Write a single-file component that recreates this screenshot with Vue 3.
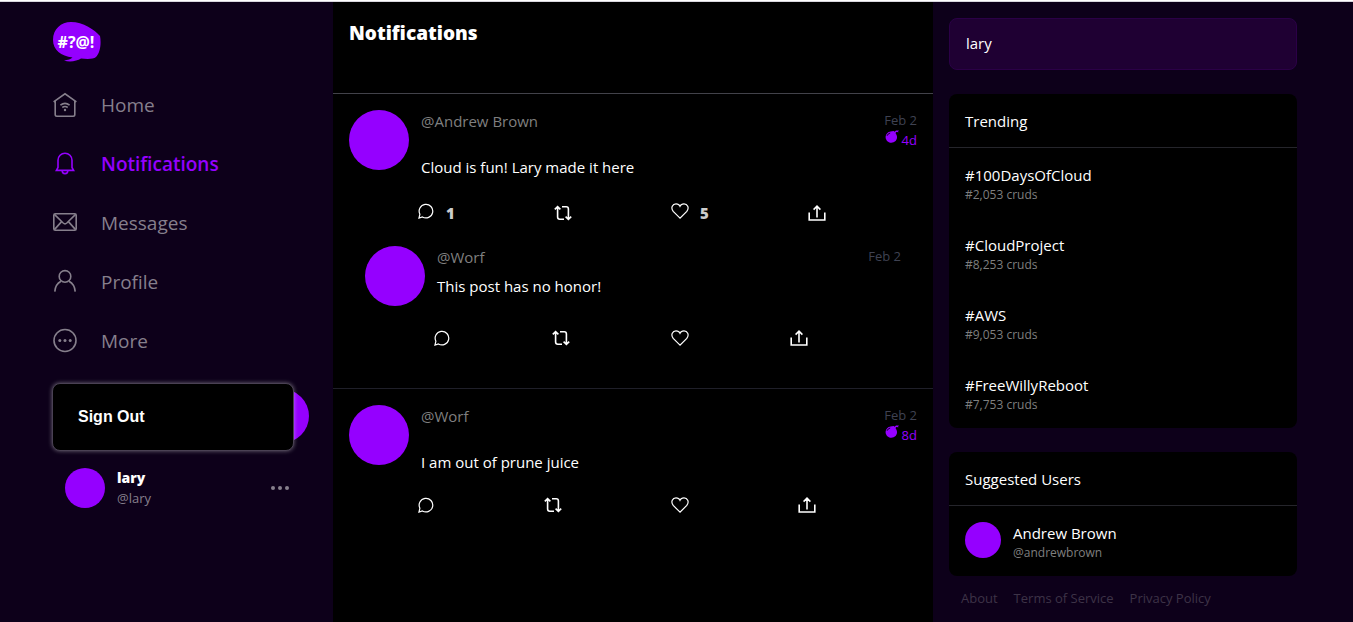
<script setup>
import { ref } from 'vue'

const search = ref('lary')

const navItems = [
  { label: 'Home', icon: 'home' },
  { label: 'Notifications', icon: 'bell', active: true },
  { label: 'Messages', icon: 'mail' },
  { label: 'Profile', icon: 'user' },
  { label: 'More', icon: 'more' },
]

const posts = [
  {
    handle: '@Andrew Brown',
    message: 'Cloud is fun! Lary made it here',
    date: 'Feb 2',
    expires: '4d',
    comments: 1,
    likes: 5,
    reply: { handle: '@Worf', message: 'This post has no honor!', date: 'Feb 2' },
  },
  {
    handle: '@Worf',
    message: 'I am out of prune juice',
    date: 'Feb 2',
    expires: '8d',
  },
]

const actions = (post) => [
  { name: 'Comment', count: post.comments, d: 'M2 15 2.9 11.2A6.8 6.8 0 1 1 5.4 13.9Z' },
  { name: 'Repost', bold: true, d: 'M.8 4.400 3.600 1.600 6.400 4.400M3.600 2V12Q3.600 14.200 5.800 14.200H10M8 1.800H12.200Q14.400 1.800 14.400 4V14M11.600 11.600 14.400 14.400 17.200 11.600' },
  { name: 'Like', count: post.likes, d: 'M9 15.200 2.200 8.400C-.6 4.800 1.600.8 5 .8 7 .8 8.400 1.800 9 3.200 9.600 1.800 11 .8 13 .8 16.400.8 18.600 4.800 15.800 8.400Z' },
  { name: 'Share', bold: true, d: 'M1.200 7.600V15H16.800V7.600M9 12.400V1.200M5.600 4.600 9 1.200 12.400 4.600' },
]

const trending = [
  { tag: '#100DaysOfCloud', count: '#2,053 cruds' },
  { tag: '#CloudProject', count: '#8,253 cruds' },
  { tag: '#AWS', count: '#9,053 cruds' },
  { tag: '#FreeWillyReboot', count: '#7,753 cruds' },
]

const footerLinks = ['About', 'Terms of Service', 'Privacy Policy']
</script>

<template>
  <div class="page">
    <div class="layout">
      <aside class="sidebar">
        <svg class="logo" viewBox="0 0 48 40" aria-hidden="true">
          <path
            fill="#9500ff"
            d="M0 18C0 7 8 0 18 0C30 0 42 8 47 14C48.500 22 47 31 43 35C40 37.500 33 37 28 36.500C24 39 17 40.500 11 38.500C15 38 18 37 19.500 35.500C8 34 0 28 0 18Z"
          />
          <text x="23" y="26" text-anchor="middle" class="logo-text">#?@!</text>
        </svg>

        <nav class="nav">
          <a
            v-for="item in navItems"
            :key="item.label"
            href="#"
            class="nav-link"
            :class="{ active: item.active }"
          >
            <svg class="nav-icon" viewBox="0 0 24 24" aria-hidden="true">
              <template v-if="item.icon === 'home'">
                <path d="M.6 8.800 12 .8 23.400 8.800M2.200 8V21.500Q2.200 23.200 3.900 23.200H20.100Q21.800 23.200 21.800 21.500V8" />
                <path d="M7.400 12.200Q12 8.600 16.600 12.200M9.300 14.500Q12 12.500 14.700 14.500" />
                <circle class="solid" cx="12" cy="17" r="1.200" />
              </template>
              <template v-else-if="item.icon === 'bell'">
                <path d="M5 15.500V8.200A7 7 0 0 1 19 8.200V15.500L20.600 18.400H3.400Z" />
                <path d="M9.200 18.800A2.800 2.800 0 0 0 14.800 18.800" />
              </template>
              <template v-else-if="item.icon === 'mail'">
                <rect x=".8" y="2.800" width="22.400" height="16.400" rx="1.500" />
                <path d="M1.400 3.400 10.200 12Q12 13.600 13.800 12L22.600 3.400M1.400 18.600 8.600 10.600M22.600 18.600 15.400 10.600" />
              </template>
              <template v-else-if="item.icon === 'user'">
                <circle cx="12" cy="6.400" r="5.800" />
                <path d="M1.800 21.600C2.200 15.800 4.500 13 8 11.200M22.200 21.600C21.800 15.800 19.500 13 16 11.200" />
              </template>
              <template v-else>
                <circle cx="12" cy="11.500" r="11" />
                <circle class="solid" cx="6.800" cy="11.500" r="1.500" />
                <circle class="solid" cx="12" cy="11.500" r="1.500" />
                <circle class="solid" cx="17.200" cy="11.500" r="1.500" />
              </template>
            </svg>
            <span>{{ item.label }}</span>
          </a>
        </nav>

        <div class="account">
          <div class="pill"></div>
          <div class="menu">
            <button type="button" class="sign-out">Sign Out</button>
          </div>
        </div>

        <div class="profile">
          <div class="avatar avatar-medium"></div>
          <div class="profile-names">
            <strong class="profile-name">lary</strong>
            <span class="profile-handle">@lary</span>
          </div>
          <svg class="dots" viewBox="0 0 18 4" aria-hidden="true">
            <circle cx="2" cy="2" r="2" />
            <circle cx="9" cy="2" r="2" />
            <circle cx="16" cy="2" r="2" />
          </svg>
        </div>
      </aside>

      <main class="feed">
        <header class="feed-header">
          <h1>Notifications</h1>
        </header>

        <section v-for="post in posts" :key="post.message" class="thread">
          <article
            v-for="(entry, i) in post.reply ? [post, post.reply] : [post]"
            :key="entry.message"
            :class="i ? 'reply' : 'post'"
          >
            <div class="post-head">
              <div class="avatar avatar-large"></div>
              <div class="post-body">
                <a href="#" class="handle">{{ entry.handle }}</a>
                <p>{{ entry.message }}</p>
              </div>
              <div class="post-meta">
                <span>{{ entry.date }}</span>
                <span v-if="entry.expires" class="expires">
                  <svg class="bomb" viewBox="0 0 14 13" aria-hidden="true">
                    <path fill="#9500ff" d="M5.500 1.500 8.600.9 9.600 1.800 11 .4 14 .6 13 1.600 13.600 2.200 11.300 2 10.500 3 11.200 4.200A5.700 5.700 0 1 1 5.500 1.500Z" />
                    <path fill="none" stroke="#160026" d="M2 5.800Q2.800 3.600 5.200 3" />
                  </svg>
                  {{ entry.expires }}
                </span>
              </div>
            </div>
            <div class="actions">
              <button
                v-for="action in actions(entry)"
                :key="action.name"
                type="button"
                class="action"
                :class="{ counted: action.count }"
                :aria-label="action.name"
              >
                <svg class="action-icon" :class="{ bold: action.bold }" viewBox="0 0 18 16" aria-hidden="true">
                  <path :d="action.d" />
                </svg>
                <span v-if="action.count" class="count">{{ action.count }}</span>
              </button>
            </div>
          </article>
        </section>
      </main>

      <aside class="rail">
        <input v-model="search" class="search" type="text" aria-label="Search" />

        <section class="card">
          <h2>Trending</h2>
          <a v-for="topic in trending" :key="topic.tag" href="#" class="card-row">
            <span class="card-lines">
              <span class="card-title">{{ topic.tag }}</span>
              <span class="card-sub">{{ topic.count }}</span>
            </span>
          </a>
        </section>

        <section class="card">
          <h2>Suggested Users</h2>
          <a href="#" class="card-row">
            <span class="avatar avatar-small"></span>
            <span class="card-lines">
              <span class="card-title">Andrew Brown</span>
              <span class="card-sub">@andrewbrown</span>
            </span>
          </a>
        </section>

        <footer class="footer">
          <a v-for="link in footerLinks" :key="link" href="#">{{ link }}</a>
        </footer>
      </aside>
    </div>
  </div>
</template>

<style>
body {
  background: #0d001a;
}
</style>

<style scoped>
* {
  box-sizing: border-box;
}

.page {
  border-top: 1px solid #fff;
  color: #fff;
  font-family: "Open Sans", "Noto Sans", sans-serif;
  font-size: 15px;
  line-height: 22px;
}

.layout {
  display: grid;
  grid-template-columns: minmax(300px, 333fr) minmax(400px, 600px) minmax(300px, 420fr);
  min-height: calc(100vh - 1px);
  border-top: 1px solid #d8d6de;
  background: #0d001a;
}

a {
  color: inherit;
  text-decoration: none;
}

button {
  border: 0;
  padding: 0;
  background: none;
  color: inherit;
  font: inherit;
  text-align: left;
  cursor: pointer;
}

.avatar {
  flex: none;
  border-radius: 50%;
  background: #9500ff;
}

.avatar-large {
  width: 60px;
  height: 60px;
}

.avatar-medium {
  width: 40px;
  height: 40px;
}

.avatar-small {
  width: 36px;
  height: 36px;
}

.sidebar {
  width: 300px;
  margin-left: auto;
  padding: 20px 24px 20px 20px;
}

.logo {
  display: block;
  width: 48px;
  height: 40px;
}

.logo-text {
  fill: #fff;
  font-family: "Open Sans", sans-serif;
  font-size: 16px;
  font-weight: 700;
}

.nav {
  display: flex;
  flex-direction: column;
  margin-top: 13px;
}

.nav-link {
  display: flex;
  align-items: center;
  gap: 24px;
  height: 59px;
  color: #867f8c;
  font-size: 19px;
}

.nav-link.active {
  color: #9500ff;
  font-weight: 600;
}

.nav-icon {
  width: 24px;
  height: 24px;
  fill: none;
  stroke: currentColor;
  stroke-width: 1.6;
  overflow: visible;
}

.solid {
  fill: currentColor;
  stroke: none;
}

.account {
  position: relative;
  margin-top: 19px;
}

.pill {
  height: 54px;
  border-radius: 27px;
  background: #9500ff;
}

.menu {
  position: absolute;
  top: -6px;
  left: -1px;
  width: 242px;
  border: 1px solid #4a4154;
  border-radius: 8px;
  background: #000;
  box-shadow: 0 0 4px rgba(255, 255, 255, 0.4);
}

.sign-out {
  display: block;
  width: 100%;
  padding: 22px 25px;
  font-family: "Liberation Sans", Arial, sans-serif;
  font-size: 16px;
  font-weight: 700;
}

.profile {
  display: flex;
  align-items: center;
  gap: 12px;
  margin-top: 24px;
  padding: 0 20px 0 12px;
}

.profile-names {
  display: flex;
  flex: 1;
  flex-direction: column;
  line-height: 21px;
}

.profile-name {
  font-size: 14px;
  font-weight: 800;
}

.profile-handle {
  color: #867f8c;
  font-size: 13px;
}

.dots {
  width: 18px;
  height: 4px;
  fill: #867f8c;
}

.feed {
  background: #000;
}

.feed-header {
  height: 92px;
  padding: 16px;
  border-bottom: 1px solid #42424a;
}

h1 {
  margin: 0;
  font-size: 19px;
  font-weight: 800;
  line-height: 30px;
}

.thread + .thread {
  border-top: 1px solid #1f1f29;
}

.post {
  padding: 16px 16px 0;
}

.reply {
  padding: 22px 32px 42px;
}

.post-head {
  display: flex;
  gap: 12px;
}

.post-body {
  flex: 1;
}

.handle {
  display: block;
  color: #7f7f7f;
}

.post-body p {
  margin: 24px 0 0;
}

.reply .post-body p {
  margin-top: 7px;
}

.post-meta {
  display: flex;
  flex-direction: column;
  align-items: flex-end;
  color: #3f4252;
  font-size: 13px;
  line-height: 20px;
}

.expires {
  display: flex;
  gap: 3px;
  color: #9500ff;
}

.bomb {
  width: 14px;
  height: 13px;
}

.actions {
  display: flex;
  align-items: center;
  margin: 24px -8px 0 68px;
}

.action {
  display: flex;
  flex: 1 1 auto;
}

.action.counted {
  display: block;
}

.action-icon {
  width: 18px;
  height: 16px;
  fill: none;
  stroke: #fff;
  stroke-width: 1.2;
}

.action-icon.bold {
  stroke-width: 1.6;
}

.count {
  margin-left: 8px;
  padding-left: 3px;
  color: #ccc;
  font-weight: 800;
}

.rail {
  display: flex;
  flex-direction: column;
  gap: 24px;
  width: 100%;
  max-width: 380px;
  padding: 16px;
}

.search {
  width: 100%;
  height: 52px;
  padding: 0 16px 2px;
  border: 1px solid #2b0047;
  border-radius: 8px;
  outline: 0;
  background: #1f0033;
  color: #fff;
  font: inherit;
}

.card {
  overflow: hidden;
  border-radius: 8px;
  background: #000;
}

h2 {
  height: 54px;
  margin: 0;
  padding: 16px;
  border-bottom: 1px solid #25252b;
  font-size: 15px;
  font-weight: 400;
}

.card-row {
  display: flex;
  gap: 12px;
  padding: 16px 16px 14px;
}

.card-lines {
  display: flex;
  flex-direction: column;
}

.card-sub {
  color: #7f7f7f;
  font-size: 12px;
  line-height: 18px;
}

.footer {
  display: flex;
  gap: 16px;
  margin-top: -12px;
  padding: 0 12px;
  color: #3d3347;
  font-size: 13px;
  line-height: 20px;
}
</style>
